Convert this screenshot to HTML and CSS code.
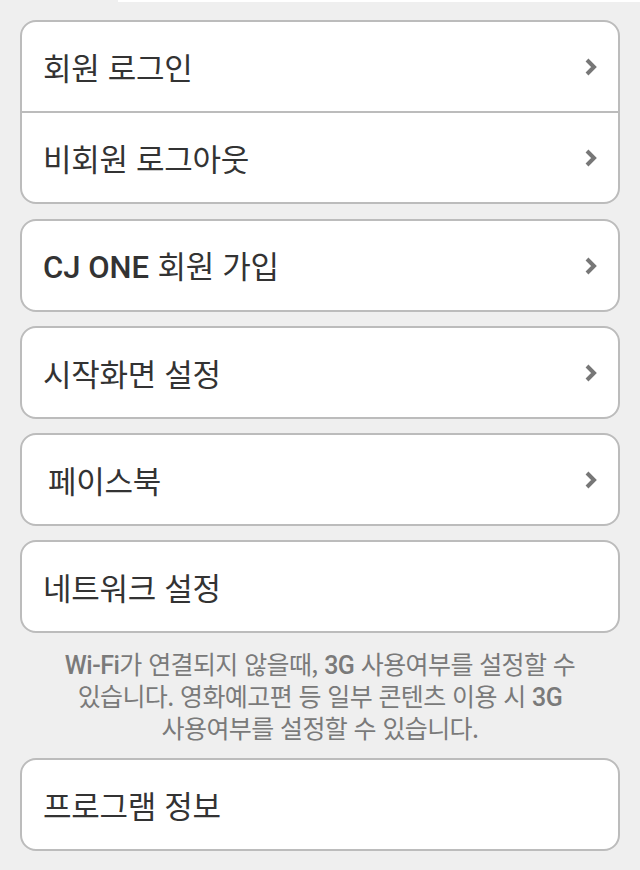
FILE: index.html
```html
<!DOCTYPE html>
<html lang="ko">
<head>
<meta charset="utf-8">
<link rel="stylesheet" href="styles.css">
</head>
<body>
<div class="strip"></div>
<main class="page">
  <section class="group">
    <div class="row"><span class="label">회원 로그인</span><svg class="chev" viewBox="0 0 14 20" width="14" height="20"><path d="M3 3 L10 10 L3 17"/></svg></div>
    <div class="row"><span class="label">비회원 로그아웃</span><svg class="chev" viewBox="0 0 14 20" width="14" height="20"><path d="M3 3 L10 10 L3 17"/></svg></div>
  </section>
  <section class="group">
    <div class="row"><span class="label"><span class="latin">CJ ONE</span> 회원 가입</span><svg class="chev" viewBox="0 0 14 20" width="14" height="20"><path d="M3 3 L10 10 L3 17"/></svg></div>
  </section>
  <section class="group">
    <div class="row"><span class="label">시작화면 설정</span><svg class="chev" viewBox="0 0 14 20" width="14" height="20"><path d="M3 3 L10 10 L3 17"/></svg></div>
  </section>
  <section class="group">
    <div class="row"><span class="label indent">페이스북</span><svg class="chev" viewBox="0 0 14 20" width="14" height="20"><path d="M3 3 L10 10 L3 17"/></svg></div>
  </section>
  <section class="group">
    <div class="row"><span class="label">네트워크 설정</span></div>
  </section>
  <p class="note"><span class="latin">Wi-Fi</span>가 연결되지 않을때, <span class="latin">3G</span> 사용여부를 설정할 수<br>있습니다. 영화예고편 등 일부 콘텐츠 이용 시 <span class="latin">3G</span><br>사용여부를 설정할 수 있습니다.</p>
  <section class="group">
    <div class="row"><span class="label">프로그램 정보</span></div>
  </section>
</main>
</body>
</html>
```

FILE: styles.css
```css
html, body {
  margin: 0;
  padding: 0;
  background: #efefef;
}
body {
  font-family: "Noto Sans CJK KR", "Noto Sans", sans-serif;
  color: #333;
}
.strip {
  height: 2px;
  margin-left: 118px;
  background: #ffffff;
}
.page {
  padding: 18px 20px 0;
  display: flex;
  flex-direction: column;
}
.group {
  background: #fff;
  border: 2px solid #bcbcbc;
  border-radius: 16px;
  margin-bottom: 14px;
  overflow: hidden;
}
.group:first-child {
  margin-bottom: 15px;
}
.row {
  height: 89px;
  display: flex;
  align-items: center;
  justify-content: space-between;
  padding: 0 20px 0 21px;
}
.row + .row {
  border-top: 2px solid #bcbcbc;
}
.label {
  font-size: 31px;
  letter-spacing: -0.3px;
  color: #333;
  line-height: 1;
}
.latin {
  font-family: Roboto, "Liberation Sans", sans-serif;
  font-weight: 500;
  line-height: 1;
}
.label .latin {
  letter-spacing: 0;
}
.indent {
  margin-left: 5px;
}
.chev {
  display: block;
  flex: none;
}
.chev path {
  fill: none;
  stroke: #777;
  stroke-width: 4;
  stroke-linejoin: miter;
}
.note {
  margin: 0 0 15px;
  text-align: center;
  font-size: 25px;
  line-height: 32px;
  color: #7a7a7a;
  letter-spacing: -0.6px;
}
.note .latin {
  letter-spacing: -0.5px;
}
```
